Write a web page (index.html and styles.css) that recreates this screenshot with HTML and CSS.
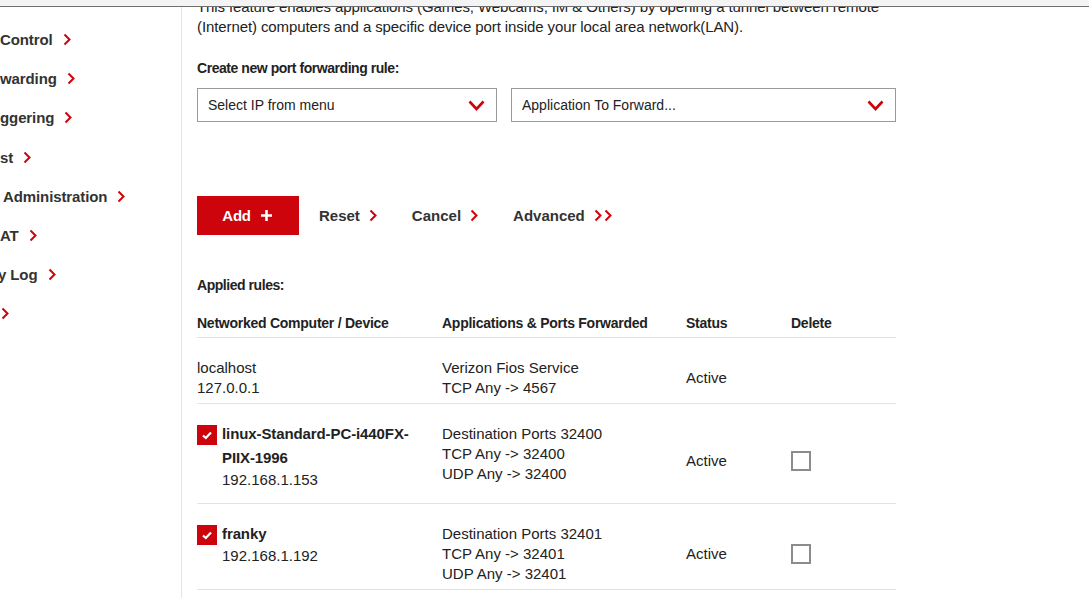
FILE: index.html
```html
<!DOCTYPE html>
<html lang="en">
<head>
<meta charset="utf-8">
<title>Port Forwarding</title>
<link rel="stylesheet" href="styles.css">
</head>
<body>
<div class="topbar"></div>
<div class="layout">
  <nav class="sidebar">
    <a class="nav-item"><span>Control</span><svg class="chev" viewBox="0 0 8 13"><polyline points="1.5,1.5 6.5,6.5 1.5,11.5"/></svg></a>
    <a class="nav-item"><span>warding</span><svg class="chev" viewBox="0 0 8 13"><polyline points="1.5,1.5 6.5,6.5 1.5,11.5"/></svg></a>
    <a class="nav-item"><span>ggering</span><svg class="chev" viewBox="0 0 8 13"><polyline points="1.5,1.5 6.5,6.5 1.5,11.5"/></svg></a>
    <a class="nav-item"><span>st</span><svg class="chev" viewBox="0 0 8 13"><polyline points="1.5,1.5 6.5,6.5 1.5,11.5"/></svg></a>
    <a class="nav-item shift-r"><span>Administration</span><svg class="chev" viewBox="0 0 8 13"><polyline points="1.5,1.5 6.5,6.5 1.5,11.5"/></svg></a>
    <a class="nav-item"><span>AT</span><svg class="chev" viewBox="0 0 8 13"><polyline points="1.5,1.5 6.5,6.5 1.5,11.5"/></svg></a>
    <a class="nav-item shift-l"><span>y Log</span><svg class="chev" viewBox="0 0 8 13"><polyline points="1.5,1.5 6.5,6.5 1.5,11.5"/></svg></a>
    <a class="nav-item"><svg class="chev first" viewBox="0 0 8 13"><polyline points="1.5,1.5 6.5,6.5 1.5,11.5"/></svg></a>
  </nav>
  <main class="content">
    <p class="intro">This feature enables applications (Games, Webcams, IM &amp; Others) by opening a tunnel between remote (Internet) computers and a specific device port inside your local area network(LAN).</p>

    <h3 class="label">Create new port forwarding rule:</h3>
    <div class="selects">
      <div class="select sel-ip"><span>Select IP from menu</span><svg class="down" viewBox="0 0 17 11"><polyline points="1.5,1.5 8.5,9 15.5,1.5"/></svg></div>
      <div class="select sel-app"><span>Application To Forward...</span><svg class="down" viewBox="0 0 17 11"><polyline points="1.5,1.5 8.5,9 15.5,1.5"/></svg></div>
    </div>

    <div class="actions">
      <button class="btn-add">Add <svg class="plus" viewBox="0 0 11 11"><path d="M5.5 0v11M0 5.5h11"/></svg></button>
      <a class="link">Reset <svg class="chev" viewBox="0 0 8 13"><polyline points="1.5,1.5 6.5,6.5 1.5,11.5"/></svg></a>
      <a class="link">Cancel <svg class="chev" viewBox="0 0 8 13"><polyline points="1.5,1.5 6.5,6.5 1.5,11.5"/></svg></a>
      <a class="link">Advanced <svg class="dchev" viewBox="0 0 19 13"><polyline points="1.5,1.5 6.5,6.5 1.5,11.5"/><polyline points="11.5,1.5 16.5,6.5 11.5,11.5"/></svg></a>
    </div>

    <h3 class="label applied">Applied rules:</h3>
    <table class="rules">
      <thead>
        <tr>
          <th class="c-dev">Networked Computer / Device</th>
          <th class="c-app">Applications &amp; Ports Forwarded</th>
          <th class="c-status">Status</th>
          <th class="c-del">Delete</th>
        </tr>
      </thead>
      <tbody>
        <tr>
          <td class="dev">
            <div>localhost</div>
            <div>127.0.0.1</div>
          </td>
          <td>
            <div>Verizon Fios Service</div>
            <div>TCP Any -&gt; 4567</div>
          </td>
          <td class="mid">Active</td>
          <td class="mid"></td>
        </tr>
        <tr>
          <td class="dev checked-dev">
            <div class="dev-line">
              <span class="cbox"><svg viewBox="0 0 20 20"><polyline points="6,10.5 8.8,13 14,7.5"/></svg></span>
              <div class="dev-text">
                <div class="dev-name">linux-Standard-PC-i440FX-PIIX-1996</div>
                <div>192.168.1.153</div>
              </div>
            </div>
          </td>
          <td>
            <div>Destination Ports 32400</div>
            <div>TCP Any -&gt; 32400</div>
            <div>UDP Any -&gt; 32400</div>
          </td>
          <td class="mid">Active</td>
          <td class="mid"><span class="delbox"></span></td>
        </tr>
        <tr>
          <td class="dev checked-dev">
            <div class="dev-line">
              <span class="cbox"><svg viewBox="0 0 20 20"><polyline points="6,10.5 8.8,13 14,7.5"/></svg></span>
              <div class="dev-text">
                <div class="dev-name">franky</div>
                <div>192.168.1.192</div>
              </div>
            </div>
          </td>
          <td>
            <div>Destination Ports 32401</div>
            <div>TCP Any -&gt; 32401</div>
            <div>UDP Any -&gt; 32401</div>
          </td>
          <td class="mid">Active</td>
          <td class="mid"><span class="delbox"></span></td>
        </tr>
      </tbody>
    </table>
  </main>
</div>
</body>
</html>
```

FILE: styles.css
```css
* { box-sizing: border-box; }

html, body {
  margin: 0;
  padding: 0;
  height: 100%;
  overflow: hidden;
  background: #fff;
  font-family: "Liberation Sans", Arial, sans-serif;
  color: #222;
}

.topbar {
  height: 7px;
  background: #f4f4f4;
  border-bottom: 1px solid #6f6f6f;
}

.layout {
  display: flex;
  height: calc(100vh - 7px);
}

.sidebar {
  width: 182px;
  flex: none;
  border-right: 1px solid #e4e4e4;
  overflow: hidden;
  padding-top: 13px;
  display: flex;
  flex-direction: column;
}

.nav-item {
  height: 39.2px;
  flex: none;
  display: flex;
  align-items: center;
  gap: 10px;
  font-size: 15px;
  font-weight: 700;
  letter-spacing: -0.1px;
  color: #333;
  white-space: nowrap;
}

.nav-item.shift-r { padding-left: 3px; }
.nav-item.shift-l { margin-left: -2px; }

.chev {
  width: 8px;
  height: 13px;
  flex: none;
  fill: none;
  stroke: #cd040b;
  stroke-width: 2;
}

.chev.first { margin-left: 1px; }

.content {
  flex: 1;
  overflow: hidden;
  padding-left: 15px;
  min-width: 0;
}

.intro {
  margin: -10px 0 0;
  max-width: 700px;
  font-size: 15px;
  letter-spacing: -0.1px;
  line-height: 20px;
  color: #222;
}

.label {
  margin: 22px 0 0;
  font-size: 14px;
  line-height: 18px;
  font-weight: 700;
  letter-spacing: -0.45px;
  color: #222;
}

.selects {
  display: flex;
  gap: 14px;
  margin-top: 11px;
}

.select {
  height: 34px;
  border: 1px solid #9a9a9a;
  display: flex;
  align-items: center;
  justify-content: space-between;
  padding: 0 11px 0 10px;
  font-size: 14px;
  color: #222;
}

.sel-ip { width: 300px; }
.sel-app { width: 385px; }

.down {
  width: 17px;
  height: 11px;
  fill: none;
  stroke: #cd040b;
  stroke-width: 2.6;
}

.actions {
  display: flex;
  align-items: center;
  margin-top: 74px;
  gap: 20px;
}

.btn-add {
  width: 102px;
  height: 39px;
  border: none;
  background: #cd040b;
  color: #fff;
  font-family: inherit;
  font-size: 15px;
  font-weight: 700;
  letter-spacing: -0.3px;
  display: flex;
  align-items: center;
  justify-content: center;
  gap: 10px;
  padding: 0 2px 0 0;
}

.plus {
  width: 11px;
  height: 11px;
  stroke: #fff;
  stroke-width: 2.6;
}

.link {
  display: flex;
  align-items: center;
  gap: 9px;
  font-size: 15px;
  font-weight: 700;
  letter-spacing: 0;
  color: #333;
  margin-right: 15px;
}

.dchev {
  width: 19px;
  height: 13px;
  fill: none;
  stroke: #cd040b;
  stroke-width: 2;
}

.applied { margin-top: 41px; }

.rules {
  width: 699px;
  margin-top: 20px;
  border-collapse: collapse;
  font-size: 15px;
  color: #222;
}

.rules th {
  text-align: left;
  font-size: 14px;
  line-height: 18px;
  font-weight: 700;
  letter-spacing: -0.25px;
  padding: 0 0 5px;
  border-bottom: 1px solid #e2e2e2;
}

.c-dev { width: 245px; }
.c-app { width: 244px; }
.c-status { width: 105px; }

.rules td {
  vertical-align: top;
  padding: 20px 10px 5px 0;
  line-height: 20px;
}

.rules tbody tr { border-bottom: 1px solid #e2e2e2; }

.rules td.mid { vertical-align: middle; }

.checked-dev { padding-bottom: 13px !important; }

.dev-line {
  display: flex;
  gap: 5px;
  align-items: flex-start;
}

.cbox {
  width: 20px;
  height: 20px;
  flex: none;
  background: #cd040b;
  margin-top: 1px;
  display: block;
}

.cbox svg {
  width: 20px;
  height: 20px;
  display: block;
  fill: none;
  stroke: #fff;
  stroke-width: 2.2;
}

.dev-text { margin-top: -2px; }

.dev-name {
  font-weight: 700;
  line-height: 24px;
  letter-spacing: -0.1px;
}

.delbox {
  display: block;
  width: 20px;
  height: 20px;
  border: 2px solid #8c8c8c;
  background: #fff;
}
```
